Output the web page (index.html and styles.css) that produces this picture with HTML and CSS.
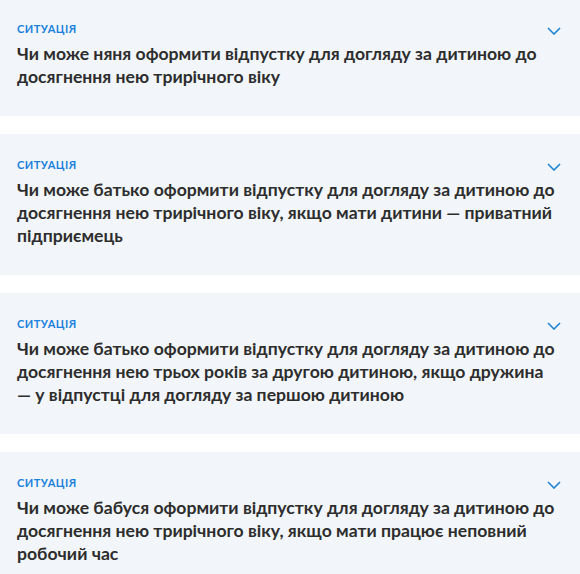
FILE: index.html
```html
<!DOCTYPE html>
<html lang="uk">
<head>
<meta charset="utf-8">
<link rel="stylesheet" href="styles.css">
</head>
<body>
<div class="list">
  <div class="card">
    <div class="head"><span class="label">Ситуація</span><svg class="chev" width="14" height="8" viewBox="0 0 14 8"><path d="M1 1l6 6 6-6" fill="none" stroke="#1d84d2" stroke-width="1.6"/></svg></div>
    <div class="title">Чи може няня оформити відпустку для догляду за дитиною до досягнення нею трирічного віку</div>
  </div>
  <div class="card">
    <div class="head"><span class="label">Ситуація</span><svg class="chev" width="14" height="8" viewBox="0 0 14 8"><path d="M1 1l6 6 6-6" fill="none" stroke="#1d84d2" stroke-width="1.6"/></svg></div>
    <div class="title">Чи може батько оформити відпустку для догляду за дитиною до досягнення нею трирічного віку, якщо мати дитини — приватний підприємець</div>
  </div>
  <div class="card">
    <div class="head"><span class="label">Ситуація</span><svg class="chev" width="14" height="8" viewBox="0 0 14 8"><path d="M1 1l6 6 6-6" fill="none" stroke="#1d84d2" stroke-width="1.6"/></svg></div>
    <div class="title">Чи може батько оформити відпустку для догляду за дитиною до досягнення нею трьох років за другою дитиною, якщо дружина —&nbsp;у відпустці для догляду за першою дитиною</div>
  </div>
  <div class="card">
    <div class="head"><span class="label">Ситуація</span><svg class="chev" width="14" height="8" viewBox="0 0 14 8"><path d="M1 1l6 6 6-6" fill="none" stroke="#1d84d2" stroke-width="1.6"/></svg></div>
    <div class="title">Чи може бабуся оформити відпустку для догляду за дитиною до досягнення нею трирічного віку, якщо мати працює неповний робочий час</div>
  </div>
</div>
</body>
</html>
```
FILE: styles.css
```css
html, body {
  margin: 0;
  padding: 0;
  background: #ffffff;
}
.list {
  display: flex;
  flex-direction: column;
  gap: 18px;
  margin-top: -2px;
}
.card {
  background: #f2f6fa;
  padding: 23px 17px 28px 17px;
  font-family: Lato, "Liberation Sans", sans-serif;
}
.head {
  display: flex;
  justify-content: space-between;
  align-items: center;
  height: 16px;
}
.label {
  font-size: 11px;
  font-weight: 700;
  text-transform: uppercase;
  letter-spacing: 0.5px;
  color: #1a80dc;
  line-height: 16px;
}
.chev {
  margin-right: 2px;
  margin-top: 3px;
}
.title {
  margin-top: 5px;
  font-size: 17.6px;
  font-weight: 700;
  line-height: 23px;
  color: #2d2d2d;
}
```
